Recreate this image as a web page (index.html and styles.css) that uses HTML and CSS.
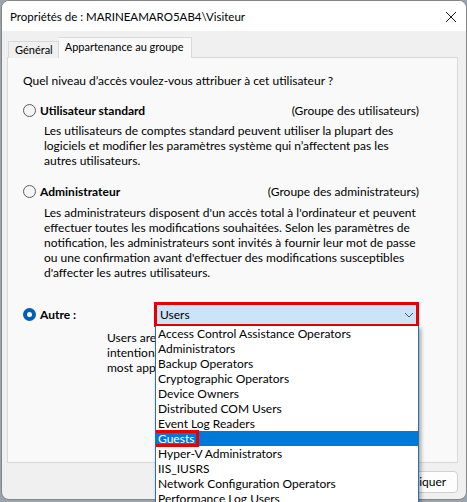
FILE: index.html
```html
<!DOCTYPE html>
<html lang="fr">
<head>
<meta charset="utf-8">
<title>Propriétés de : MARINEAMARO5AB4\Visiteur</title>
<link rel="stylesheet" href="styles.css">
</head>
<body>
<div class="window">
  <div class="titlebar">
    <span class="title">Propriétés de : MARINEAMARO5AB4\Visiteur</span>
    <svg class="close" width="12" height="12" viewBox="0 0 12 12" aria-hidden="true">
      <path d="M1 1 L11 11 M11 1 L1 11" stroke="#1a1a1a" stroke-width="1" fill="none"/>
    </svg>
  </div>

  <div class="tabs">
    <div class="tab">Général</div>
    <div class="tab active">Appartenance au groupe</div>
  </div>

  <div class="panel">
    <p class="question">Quel niveau d’accès voulez-vous attribuer à cet utilisateur ?</p>

    <div class="option">
      <div class="radio-row">
        <span class="radio"></span>
        <span class="label">Utilisateur standard</span>
        <span class="group">(Groupe des utilisateurs)</span>
      </div>
      <p class="desc">Les utilisateurs de comptes standard peuvent utiliser la plupart des<br>logiciels et modifier les paramètres système qui n’affectent pas les<br>autres utilisateurs.</p>
    </div>

    <div class="option admin">
      <div class="radio-row">
        <span class="radio"></span>
        <span class="label">Administrateur</span>
        <span class="group">(Groupe des administrateurs)</span>
      </div>
      <p class="desc admin-desc">Les administrateurs disposent d'un accès total à l'ordinateur et peuvent<br>effectuer toutes les modifications souhaitées. Selon les paramètres de<br>notification, les administrateurs sont invités à fournir leur mot de passe<br>ou une confirmation avant d'effectuer des modifications susceptibles<br>d'affecter les autres utilisateurs.</p>
    </div>

    <div class="option other">
      <div class="radio-row">
        <span class="radio checked"></span>
        <span class="label other-label">Autre :</span>
        <div class="combo-wrap">
          <div class="combo">
            <span>Users</span>
            <svg class="chevron" width="10" height="6" viewBox="0 0 10 6" aria-hidden="true">
              <path d="M1 1 L5 5 L9 1" stroke="#555" stroke-width="1" fill="none"/>
            </svg>
          </div>
          <ul class="dropdown">
            <li>Access Control Assistance Operators</li>
            <li>Administrators</li>
            <li>Backup Operators</li>
            <li>Cryptographic Operators</li>
            <li>Device Owners</li>
            <li>Distributed COM Users</li>
            <li>Event Log Readers</li>
            <li class="selected"><span class="mark">Guests</span></li>
            <li>Hyper-V Administrators</li>
            <li>IIS_IUSRS</li>
            <li>Network Configuration Operators</li>
            <li>Performance Log Users</li>
          </ul>
        </div>
      </div>
      <p class="desc users-desc">Users are prevented from making accidental or<br>intentional system-wide changes and can run<br>most applications</p>
    </div>
  </div>

  <div class="buttons">
    <button class="btn">OK</button>
    <button class="btn">Annuler</button>
    <button class="btn">Appliquer</button>
  </div>
</div>
</body>
</html>
```
FILE: styles.css
```css
html, body {
  margin: 0;
  height: 100%;
  overflow: hidden;
}

body {
  background: #9aa4ae;
  font-family: "Lato", "Noto Sans", sans-serif;
  font-size: 12px;
  color: #000;
}

.window {
  position: relative;
  box-sizing: border-box;
  width: 466px;
  height: 500px;
  margin-left: 1px;
  background: #f0f0f0;
  border: 1px solid #858585;
  border-radius: 8px;
}

/* title bar */
.titlebar {
  height: 30px;
  background: #fff;
  border-radius: 7px 7px 0 0;
  display: flex;
  align-items: center;
  padding-left: 8px;
  padding-right: 9px;
}

.title {
  flex: 1;
  font-size: 11.5px;
  padding-top: 1px;
}

.close {
  display: block;
  margin-top: 1px;
}

/* tabs */
.tabs {
  display: flex;
  align-items: flex-end;
  height: 27px;
  margin-left: 6px;
  position: relative;
  z-index: 1;
}

.tab {
  box-sizing: border-box;
  height: 17px;
  padding: 0 5px 0 6px;
  font-size: 11px;
  line-height: 16px;
  border: 1px solid #d9d9d9;
  border-bottom: none;
  background: #f0f0f0;
}

.tab.active {
  height: 21px;
  padding: 0 8px 0 6px;
  line-height: 18px;
  background: #f9f9f9;
  border-left: none;
}

/* tab page */
.panel {
  box-sizing: border-box;
  width: 451px;
  height: 406px;
  margin-left: 5px;
  margin-top: -1px;
  padding: 15px 0 0 15px;
  background: #f9f9f9;
  border: 1px solid #d9d9d9;
}

.question {
  margin: 0;
  line-height: 15px;
}

.option {
  margin-top: 15px;
}

.option.admin {
  margin-top: 16px;
}

.option.other {
  margin-top: 22px;
}

.radio-row {
  display: flex;
  align-items: center;
  height: 15px;
  padding-right: 38px;
}

.other .radio-row {
  height: 25px;
}

.radio {
  box-sizing: border-box;
  width: 13px;
  height: 13px;
  flex-shrink: 0;
  border-radius: 50%;
  border: 1px solid #5d5d5d;
  background: #f5f5f5;
  margin-right: 4px;
}

.radio.checked {
  border: 4px solid #005fb8;
  background: #fff;
}

.label {
  font-weight: bold;
  flex: 1;
}

.other-label {
  flex: 0 0 114px;
}

.group {
  white-space: nowrap;
}

.desc {
  margin: 5px 0 0 21px;
  line-height: 15px;
  white-space: nowrap;
}

.admin-desc {
  margin-top: 6px;
}

.users-desc {
  margin-top: 3px;
  margin-left: 84px;
}

/* combo box with its open list */
.combo-wrap {
  position: relative;
  width: 266px;
  height: 25px;
}

.combo {
  box-sizing: border-box;
  height: 25px;
  display: flex;
  align-items: center;
  justify-content: space-between;
  padding: 0 2px 1px 3px;
  background: #cce4f7;
  border: 3px solid #e60000;
}

.chevron {
  display: block;
  margin-top: 1px;
}

.dropdown {
  position: absolute;
  top: 24px;
  left: 1px;
  z-index: 5;
  box-sizing: border-box;
  width: 264px;
  height: 176px;
  margin: 0;
  padding: 0;
  list-style: none;
  overflow: hidden;
  background: #fff;
  border-left: 1px solid #2a6fb0;
  border-right: 1px solid #2a6fb0;
  box-shadow: 2px 2px 4px rgba(0, 0, 0, 0.35);
}

.dropdown li {
  height: 15px;
  line-height: 15px;
  padding-left: 2px;
  white-space: nowrap;
}

.dropdown li.selected {
  background: #0078d7;
  color: #fff;
}

.mark {
  position: relative;
  display: inline-block;
}

.mark::after {
  content: "";
  position: absolute;
  top: -1px;
  bottom: -1px;
  left: -5px;
  right: -5px;
  border: 3px solid #e60000;
}

/* dialog buttons */
.buttons {
  display: flex;
  justify-content: flex-end;
  gap: 6px;
  width: 451px;
  margin: 8px 0 0 5px;
}

.btn {
  box-sizing: border-box;
  width: 75px;
  height: 22px;
  font-family: inherit;
  font-size: 12px;
  color: #000;
  background: #fdfdfd;
  border: 1px solid #d0d0d0;
  border-radius: 4px;
  padding: 0 0 1px;
}
```
